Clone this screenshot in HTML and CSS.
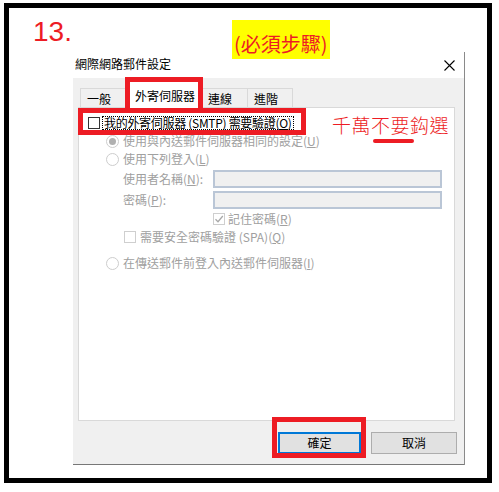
FILE: index.html
```html
<!DOCTYPE html>
<html lang="zh-Hant">
<head>
<meta charset="utf-8">
<title>網際網路郵件設定</title>
<link rel="stylesheet" href="styles.css">
</head>
<body>
<div class="frame">
  <div class="header">
    <span class="step">13.</span>
    <span class="must">(必須步驟)</span>
  </div>
  <div class="dialog">
    <div class="titlebar">
      <span class="title">網際網路郵件設定</span>
      <svg class="close" width="11" height="11" viewBox="0 0 11 11"><path d="M0.5 0.5L10.5 10.5M10.5 0.5L0.5 10.5" stroke="#000" stroke-width="1.1" fill="none"/></svg>
    </div>
    <div class="body">
      <div class="tabs">
        <div class="tab t1">一般</div>
        <div class="tab active">外寄伺服器</div>
        <div class="tab t3">連線</div>
        <div class="tab t4">進階</div>
      </div>
      <div class="panel">
        <div class="row r-auth">
          <span class="cb"></span>
          <span class="focus">我的外寄伺服器 (SMTP) 需要驗證(<u>O</u>)</span>
        </div>
        <div class="row r-radio">
          <span class="radio checked"></span>
          <span>使用與內送郵件伺服器相同的設定(<u>U</u>)</span>
        </div>
        <div class="row r-radio">
          <span class="radio"></span>
          <span>使用下列登入(<u>L</u>)</span>
        </div>
        <div class="row r-field r-user">
          <span class="flabel">使用者名稱(<u>N</u>):</span>
          <span class="input"></span>
        </div>
        <div class="row r-field r-pass">
          <span class="flabel">密碼(<u>P</u>):</span>
          <span class="input"></span>
        </div>
        <div class="row r-remember">
          <span class="cb dis"><svg width="10" height="10" viewBox="0 0 10 10"><path d="M1.5 5.2L4 7.7L8.8 2" stroke="#a8a8a8" stroke-width="1.3" fill="none"/></svg></span>
          <span>記住密碼(<u>R</u>)</span>
        </div>
        <div class="row r-spa">
          <span class="cb dis"></span>
          <span>需要安全密碼驗證 (SPA)(<u>Q</u>)</span>
        </div>
        <div class="row r-radio r-last">
          <span class="radio"></span>
          <span>在傳送郵件前登入內送郵件伺服器(<u>I</u>)</span>
        </div>
      </div>
      <div class="buttons">
        <button class="btn ok">確定</button>
        <button class="btn cancel">取消</button>
      </div>
    </div>
  </div>

  <div class="mark mark-tab"></div>
  <div class="mark mark-check"></div>
  <div class="note">千萬不要鈎選</div>
  <div class="note-line"></div>
  <div class="mark mark-ok"></div>
</div>
</body>
</html>
```

FILE: styles.css
```css
* { box-sizing: border-box; }
html, body { margin: 0; padding: 0; background: #fff; }
body {
  width: 499px;
  height: 492px;
  overflow: hidden;
  font-family: "Noto Sans CJK TC", "Noto Sans", sans-serif;
}

.frame {
  position: relative;
  margin: 3px 0 0 4px;
  width: 488px;
  height: 480px;
  border: 5px solid #000;
}

.header {
  display: flex;
  align-items: flex-start;
  height: 44px;
}
.step {
  width: 199px;
  margin-left: 24px;
  margin-top: 10px;
  font-family: "Liberation Sans", Arial, sans-serif;
  font-size: 28px;
  line-height: 28px;
  color: #ed1c24;
}
.must {
  margin-top: 12px;
  width: 98px;
  height: 39px;
  padding-top: 9px;
  padding-left: 2px;
  background: #ffff00;
  color: #ed1c24;
  font-size: 20px;
  line-height: 29px;
  white-space: nowrap;
}

.dialog {
  margin-left: 64px;
  width: 392px;
  border-right: 1px solid #8a8a8a;
}
.titlebar {
  display: flex;
  justify-content: space-between;
  align-items: flex-start;
  height: 26px;
  padding: 3px 9px 0 2px;
  background: #fff;
}
.title {
  font-size: 12px;
  line-height: 18px;
  color: #000;
}
.close { margin-top: 5px; }

.body {
  height: 387px;
  padding: 1px 0 0 5px;
  background: #f0f0f0;
  border-bottom: 1px solid #777;
  font-size: 12px;
}

.tabs {
  display: flex;
  align-items: flex-end;
  height: 28px;
  margin-left: 2px;
  position: relative;
  z-index: 1;
}
.tab {
  height: 19px;
  padding-left: 6px;
  border: 1px solid #d9d9d9;
  border-bottom: none;
  background: #f0f0f0;
  line-height: 19px;
  color: #000;
  white-space: nowrap;
}
.t1 { width: 48px; border-right: none; }
.t3 { width: 46px; border-left: none; }
.t4 { width: 45px; border-left: none; }
.tab.active {
  width: 74px;
  height: 27px;
  margin-bottom: -1px;
  padding-top: 5px;
  line-height: 18px;
  background: #fff;
}

.panel {
  display: flex;
  flex-direction: column;
  width: 377px;
  height: 314px;
  padding-top: 6px;
  background: #fff;
  border: 1px solid #d9d9d9;
  color: #a0a0a0;
}
.row {
  display: flex;
  align-items: center;
  height: 18px;
  line-height: 16px;
  white-space: nowrap;
}
.r-auth { padding-left: 9px; gap: 2px; color: #000; }
.r-radio { padding-left: 27px; gap: 4px; }
.r-field { padding-left: 44px; }
.r-user { height: 22px; }
.r-pass { height: 20px; }
.r-remember { padding-left: 134px; gap: 3px; }
.r-spa { padding-left: 45px; gap: 4px; }
.r-last { margin-top: 8px; }

.cb {
  display: flex;
  align-items: center;
  justify-content: center;
  width: 12px;
  height: 12px;
  border: 1px solid #333;
  background: #fff;
}
.cb.dis { border-color: #cfcfcf; }
.focus {
  border: 1px dotted #000;
  padding: 0 1px;
  height: 14px;
  line-height: 12px;
  letter-spacing: -0.3px;
}
.radio {
  position: relative;
  width: 13px;
  height: 13px;
  border: 1px solid #cdcdcd;
  border-radius: 50%;
  background: #fff;
}
.radio.checked::after {
  content: "";
  position: absolute;
  left: 2px;
  top: 2px;
  width: 7px;
  height: 7px;
  border-radius: 50%;
  background: #b0b0b0;
}
.flabel { width: 90px; }
.input {
  width: 229px;
  height: 18px;
  border: 2px solid #bac6d6;
  background: #f0f0f0;
}

.buttons {
  display: flex;
  justify-content: flex-end;
  gap: 10px;
  margin-top: 11px;
  padding-right: 7px;
}
.btn {
  height: 22px;
  padding: 0;
  font-family: inherit;
  font-size: 12px;
  line-height: 18px;
  color: #000;
  background: #e1e1e1;
  border: 1px solid #adadad;
}
.btn.ok {
  width: 83px;
  border-color: #0078d7;
  box-shadow: inset 0 0 0 1px #0078d7;
}
.btn.cancel { width: 86px; }

.mark {
  position: absolute;
  border: 5px solid #ed1c24;
  z-index: 2;
}
.mark-tab { left: 116px; top: 69px; width: 78px; height: 36px; }
.mark-check { left: 69px; top: 100px; width: 228px; height: 27px; }
.mark-ok { left: 263px; top: 409px; width: 94px; height: 41px; }

.note {
  position: absolute;
  left: 323px;
  top: 107px;
  font-size: 19px;
  line-height: 20px;
  letter-spacing: 0.5px;
  color: #ed1c24;
  white-space: nowrap;
  font-weight: 300;
}
.note-line {
  position: absolute;
  left: 364px;
  top: 131px;
  width: 41px;
  height: 4px;
  border-radius: 2px;
  background: #ed1c24;
}
```
